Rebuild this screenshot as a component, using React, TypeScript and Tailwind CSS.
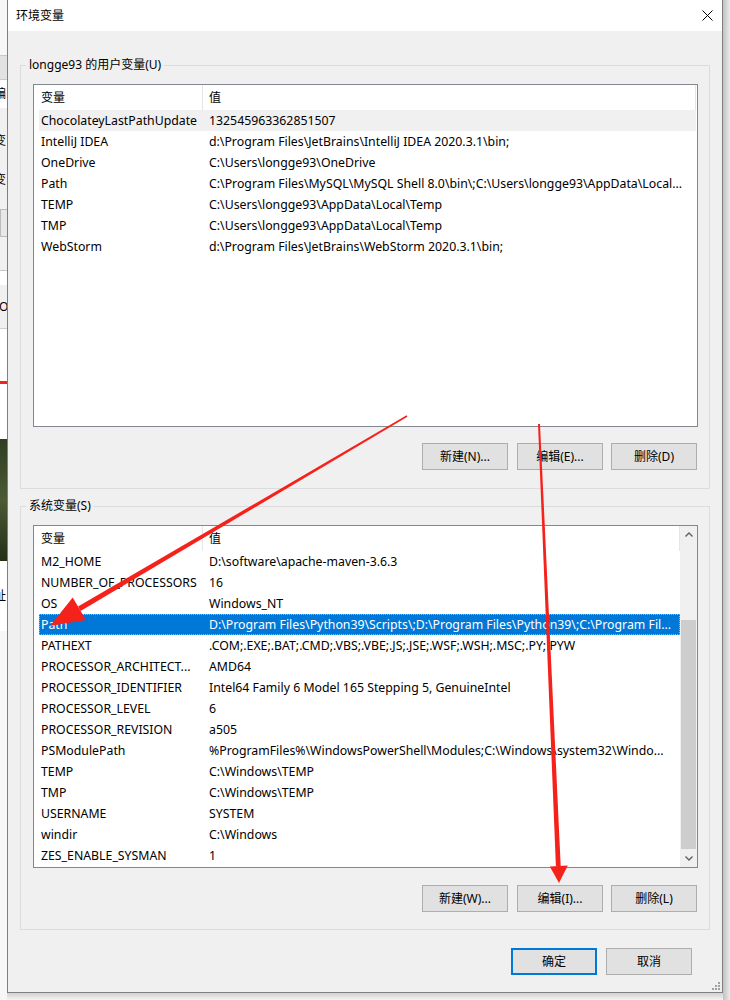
import React from "react";

const userVars: [string, string][] = [
  ["ChocolateyLastPathUpdate", "132545963362851507"],
  ["IntelliJ IDEA", "d:\\Program Files\\JetBrains\\IntelliJ IDEA 2020.3.1\\bin;"],
  ["OneDrive", "C:\\Users\\longge93\\OneDrive"],
  ["Path", "C:\\Program Files\\MySQL\\MySQL Shell 8.0\\bin\\;C:\\Users\\longge93\\AppData\\Local..."],
  ["TEMP", "C:\\Users\\longge93\\AppData\\Local\\Temp"],
  ["TMP", "C:\\Users\\longge93\\AppData\\Local\\Temp"],
  ["WebStorm", "d:\\Program Files\\JetBrains\\WebStorm 2020.3.1\\bin;"],
];

const sysVars: [string, string][] = [
  ["M2_HOME", "D:\\software\\apache-maven-3.6.3"],
  ["NUMBER_OF_PROCESSORS", "16"],
  ["OS", "Windows_NT"],
  ["Path", "D:\\Program Files\\Python39\\Scripts\\;D:\\Program Files\\Python39\\;C:\\Program Fil..."],
  ["PATHEXT", ".COM;.EXE;.BAT;.CMD;.VBS;.VBE;.JS;.JSE;.WSF;.WSH;.MSC;.PY;.PYW"],
  ["PROCESSOR_ARCHITECT...", "AMD64"],
  ["PROCESSOR_IDENTIFIER", "Intel64 Family 6 Model 165 Stepping 5, GenuineIntel"],
  ["PROCESSOR_LEVEL", "6"],
  ["PROCESSOR_REVISION", "a505"],
  ["PSModulePath", "%ProgramFiles%\\WindowsPowerShell\\Modules;C:\\Windows\\system32\\Windo..."],
  ["TEMP", "C:\\Windows\\TEMP"],
  ["TMP", "C:\\Windows\\TEMP"],
  ["USERNAME", "SYSTEM"],
  ["windir", "C:\\Windows"],
  ["ZES_ENABLE_SYSMAN", "1"],
];

function Btn({ label, primary }: { label: string; primary?: boolean }) {
  return (
    <button
      className={
        "h-[27px] w-[86px] bg-[#e1e1e1] text-[12px] text-black flex items-center justify-center " +
        (primary ? "border-2 border-[#0078d7]" : "border border-[#adadad]")
      }
    >
      {label}
    </button>
  );
}

function Header() {
  return (
    <div className="flex h-[25px] bg-white">
      <div className="w-[169px] border-r border-[#e5e5e5] pl-[7px] flex items-center">变量</div>
      <div className="flex-1 border-r border-[#e5e5e5] pl-[6px] flex items-center">值</div>
    </div>
  );
}

function Rows({ rows, selected, focused }: { rows: [string, string][]; selected: number; focused?: boolean }) {
  return (
    <div className="flex flex-col text-[12.3px]">
      {rows.map(([name, value], i) => {
        const sel = i === selected;
        let cls = "ml-[5px] flex h-[21px] items-center pt-[1px] whitespace-nowrap";
        if (sel && focused) cls += " bg-[#0078d7] text-white outline-1 outline-dotted outline-[#f5a54a] -outline-offset-1";
        else if (sel) cls += " bg-[#f0f0f0]";
        return (
          <div key={i} className={cls}>
            <div className="w-[163px] pl-[2px] overflow-hidden">{name}</div>
            <div className="flex-1 pl-[7px] overflow-hidden">{value}</div>
          </div>
        );
      })}
    </div>
  );
}

function Chevron({ up }: { up?: boolean }) {
  return (
    <svg width="8" height="5" viewBox="0 0 8 5">
      <polyline
        points={up ? "0.5,4.5 4,1 7.5,4.5" : "0.5,0.5 4,4 7.5,0.5"}
        fill="none"
        stroke="#606060"
        strokeWidth="1.4"
      />
    </svg>
  );
}

function Buttons({ labels, mt }: { labels: string[]; mt: string }) {
  return (
    <div className={"flex justify-end mr-[1px] " + mt}>
      <Btn label={labels[0]} />
      <div className="w-[9px]" />
      <Btn label={labels[1]} />
      <div className="w-[8px]" />
      <Btn label={labels[2]} />
    </div>
  );
}

function LeftStrip() {
  return (
    <div className="w-[7px] h-[1000px] shrink-0 overflow-hidden flex flex-col text-[12px] leading-none text-black">
      <div className="h-[55px] bg-[#f7f7f7]" />
      <div className="h-[25px] bg-[#e2e2e2] border-y border-[#c9c9c9]" />
      <div className="h-[28px] bg-white flex items-center">
        <span className="-ml-[6px]">编</span>
      </div>
      <div className="h-[162px] bg-[#f0f0f0] flex flex-col">
        <div className="h-[39px] flex items-end">
          <span className="-ml-[6px]">变</span>
        </div>
        <div className="h-[39px] flex items-end">
          <span className="-ml-[6px]">变</span>
        </div>
        <div className="h-[28px] mt-[23px] bg-[#e8e8e8] border-y border-l border-[#bcbcbc]" />
      </div>
      <div className="h-[15px] bg-white border-t border-[#c8c8c8]" />
      <div className="h-[44px] bg-[#f0f0f0] border-b border-[#cfcfcf] flex items-center">
        <span className="-ml-[1px]">Oc</span>
      </div>
      <div className="h-[52px] bg-white" />
      <div className="h-[3px] bg-[#f0261c]" />
      <div className="h-[55px] bg-white" />
      <div className="h-[122px] bg-linear-to-b from-[#2f3d22] via-[#4b5a35] to-[#243018]" />
      <div className="h-[70px] bg-white flex items-center">
        <span className="-ml-[6px]">址</span>
      </div>
      <div className="flex-1 bg-[#f7f7f7]" />
    </div>
  );
}

function Arrows() {
  return (
    <svg className="absolute left-0 top-0 pointer-events-none" width="730" height="1000" viewBox="0 0 730 1000">
      <g fill="#f5221b">
        <polygon points="407.4,416.7 406.6,415.3 78,606.6 80.6,611" />
        <polygon points="50,626 85.9,620 72.7,597.6" />
        <polygon points="540,424 538,424 555.9,866.1 560.7,865.9" />
        <polygon points="559,883 567.8,865.6 549.8,866.4" />
      </g>
    </svg>
  );
}

export default function App() {
  return (
    <div className="relative w-[730px] h-[1000px] overflow-hidden bg-[#f4f4f4] font-['Noto_Sans','Noto_Sans_CJK_SC',sans-serif] text-[12px] text-black">
      <div className="flex">
        <LeftStrip />
        <div className="w-[716px] shrink-0 flex flex-col">
          <div className="relative h-[993px] bg-[#f0f0f0] border-x border-b border-[#7f7f7f] flex flex-col">
            <div className="h-[31px] bg-white flex items-center justify-between pl-[8px] pr-[9px]">
              <span>环境变量</span>
              <svg width="11" height="11" viewBox="0 0 11 11">
                <path d="M0.5 0.5 L10.5 10.5 M10.5 0.5 L0.5 10.5" stroke="#000" strokeWidth="1" />
              </svg>
            </div>
            <div className="flex flex-col pt-[26px] px-[12px]">
              <fieldset className="border border-[#dcdcdc] pl-[12px] pr-[11px] pb-[18px]">
                <legend className="-ml-[7px] px-[3px] leading-[16px]">longge93 的用户变量(U)</legend>
                <div className="mt-[11px] h-[343px] border border-[#828790] bg-white overflow-hidden">
                  <div className="mr-[1px]">
                    <Header />
                    <Rows rows={userVars} selected={0} />
                  </div>
                </div>
                <Buttons labels={["新建(N)...", "编辑(E)...", "删除(D)"]} mt="mt-[16px]" />
              </fieldset>
              <fieldset className="mt-[9px] border border-[#dcdcdc] pl-[12px] pr-[11px] pb-[17px]">
                <legend className="-ml-[7px] px-[3px] leading-[16px]">系统变量(S)</legend>
                <div className="mt-[11px] h-[343px] border border-[#828790] bg-white overflow-hidden flex">
                  <div className="flex-1 min-w-0">
                    <Header />
                    <Rows rows={sysVars} selected={3} focused />
                  </div>
                  <div className="w-[17px] bg-[#f0f0f0] flex flex-col">
                    <div className="h-[17px] flex items-center justify-center">
                      <Chevron up />
                    </div>
                    <div className="flex-1 flex flex-col">
                      <div className="mt-[77px] h-[229px] mx-[1px] bg-[#cdcdcd]" />
                    </div>
                    <div className="h-[17px] flex items-center justify-center">
                      <Chevron />
                    </div>
                  </div>
                </div>
                <Buttons labels={["新建(W)...", "编辑(I)...", "删除(L)"]} mt="mt-[17px]" />
              </fieldset>
              <div className="mt-[18px] flex justify-end pr-[18px]">
                <Btn label="确定" primary />
                <div className="w-[9px]" />
                <Btn label="取消" />
              </div>
            </div>
            <svg className="absolute right-[2px] bottom-[2px]" width="9" height="9" viewBox="0 0 9 9">
              <g fill="#a0a0a0">
                <rect x="7" y="1" width="2" height="2" />
                <rect x="4" y="4" width="2" height="2" />
                <rect x="7" y="4" width="2" height="2" />
                <rect x="1" y="7" width="2" height="2" />
                <rect x="4" y="7" width="2" height="2" />
                <rect x="7" y="7" width="2" height="2" />
              </g>
            </svg>
          </div>
          <div className="h-[7px] bg-linear-to-b from-[#d2d2d2] to-[#f4f4f4]" />
        </div>
        <div className="w-[7px] h-[1000px] shrink-0 bg-linear-to-r from-[#c2c2c2] to-[#ebebeb]" />
      </div>
      <Arrows />
    </div>
  );
}
